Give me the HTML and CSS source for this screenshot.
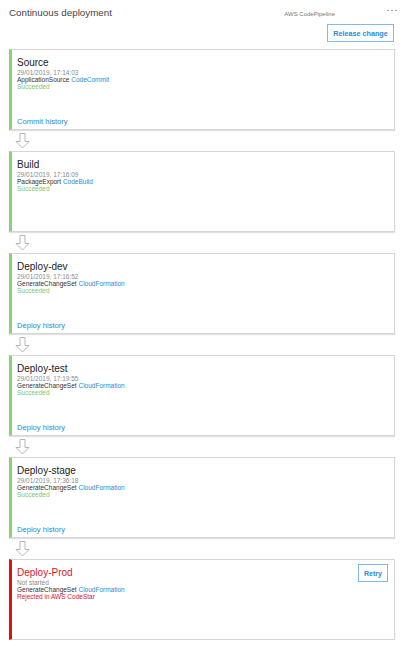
FILE: index.html
```html
<!DOCTYPE html>
<html>
<head>
<meta charset="utf-8">
<link rel="stylesheet" href="styles.css">
</head>
<body>
<div class="page">
  <header class="header">
    <h1 class="title">Continuous deployment</h1>
    <div class="meta">
      <div class="meta-top">
        <span class="provider">AWS CodePipeline</span>
        <svg class="dots" width="10" height="3" viewBox="0 0 10 3"><circle cx="1" cy="1.5" r="0.8"/><circle cx="5" cy="1.5" r="0.8"/><circle cx="9" cy="1.5" r="0.8"/></svg>
      </div>
      <button class="btn btn-release">Release change</button>
    </div>
  </header>

  <main class="stages">
    <section class="card ok">
      <div class="card-body">
        <h2 class="stage-name">Source</h2>
        <div class="line muted">29/01/2019, 17:14:03</div>
        <div class="line">ApplicationSource <a class="lnk">CodeCommit</a></div>
        <div class="line green">Succeeded</div>
        <a class="history">Commit history</a>
      </div>
    </section>
    <div class="arrow"><svg width="15" height="16" viewBox="0 0 15 16"><path d="M5 0.5 H10 V8.5 H14 L7.5 15 L1 8.5 H5 Z"/></svg></div>

    <section class="card ok">
      <div class="card-body">
        <h2 class="stage-name">Build</h2>
        <div class="line muted">29/01/2019, 17:16:09</div>
        <div class="line">PackageExport <a class="lnk">CodeBuild</a></div>
        <div class="line green">Succeeded</div>
      </div>
    </section>
    <div class="arrow"><svg width="15" height="16" viewBox="0 0 15 16"><path d="M5 0.5 H10 V8.5 H14 L7.5 15 L1 8.5 H5 Z"/></svg></div>

    <section class="card ok">
      <div class="card-body">
        <h2 class="stage-name">Deploy-dev</h2>
        <div class="line muted">29/01/2019, 17:16:52</div>
        <div class="line">GenerateChangeSet <a class="lnk">CloudFormation</a></div>
        <div class="line green">Succeeded</div>
        <a class="history">Deploy history</a>
      </div>
    </section>
    <div class="arrow"><svg width="15" height="16" viewBox="0 0 15 16"><path d="M5 0.5 H10 V8.5 H14 L7.5 15 L1 8.5 H5 Z"/></svg></div>

    <section class="card ok">
      <div class="card-body">
        <h2 class="stage-name">Deploy-test</h2>
        <div class="line muted">29/01/2019, 17:19:55</div>
        <div class="line">GenerateChangeSet <a class="lnk">CloudFormation</a></div>
        <div class="line green">Succeeded</div>
        <a class="history">Deploy history</a>
      </div>
    </section>
    <div class="arrow"><svg width="15" height="16" viewBox="0 0 15 16"><path d="M5 0.5 H10 V8.5 H14 L7.5 15 L1 8.5 H5 Z"/></svg></div>

    <section class="card ok">
      <div class="card-body">
        <h2 class="stage-name">Deploy-stage</h2>
        <div class="line muted">29/01/2019, 17:36:18</div>
        <div class="line">GenerateChangeSet <a class="lnk">CloudFormation</a></div>
        <div class="line green">Succeeded</div>
        <a class="history">Deploy history</a>
      </div>
    </section>
    <div class="arrow"><svg width="15" height="16" viewBox="0 0 15 16"><path d="M5 0.5 H10 V8.5 H14 L7.5 15 L1 8.5 H5 Z"/></svg></div>

    <section class="card fail">
      <div class="card-body">
        <h2 class="stage-name red">Deploy-Prod</h2>
        <div class="line muted">Not started</div>
        <div class="line">GenerateChangeSet <a class="lnk">CloudFormation</a></div>
        <div class="line red">Rejected in AWS CodeStar</div>
      </div>
      <button class="btn btn-retry">Retry</button>
    </section>
  </main>
</div>
</body>
</html>
```

FILE: styles.css
```css
* { box-sizing: border-box; }
html, body { margin: 0; padding: 0; background: #fff; }
body { font-family: "Liberation Sans", Arial, sans-serif; color: #333; }

.page { width: 404px; }

.header {
  display: flex;
  justify-content: space-between;
  align-items: flex-start;
  height: 49px;
  padding: 0 7px 0 9px;
}
.title {
  margin: 7px 0 0 0;
  font-size: 9.8px;
  line-height: 12px;
  font-weight: normal;
  color: #444;
}
.meta {
  display: flex;
  flex-direction: column;
  align-items: flex-end;
  padding-top: 9px;
}
.meta-top {
  display: flex;
  align-items: flex-start;
  gap: 52px;
  height: 10px;
}
.provider {
  font-size: 6px;
  line-height: 10px;
  color: #777;
}
.dots { fill: #888; margin-top: 0px; }

.btn {
  font-family: "Liberation Sans", Arial, sans-serif;
  background: #fff;
  border: 1px solid #7dbbe8;
  color: #2b8ad3;
  font-weight: bold;
  cursor: pointer;
  padding: 0;
}
.btn-release {
  margin-top: 5px;
  margin-right: 3px;
  width: 67px;
  height: 18px;
  font-size: 7.2px;
}

.stages {
  display: flex;
  flex-direction: column;
  padding: 0 9px;
}
.card {
  display: flex;
  height: 81px;
  border: 1px solid #d6d6d6;
  border-left: 3px solid #8bd17a;
  box-shadow: 0 1px 1px rgba(0,0,0,0.12);
  padding: 4px 6px 3px 5px;
  background: #fff;
}
.card.fail { border-left-color: #d9140f; }
.card-body {
  flex: 1;
  display: flex;
  flex-direction: column;
  padding-top: 3px;
}
.stage-name {
  margin: 0;
  font-size: 10px;
  line-height: 12px;
  font-weight: normal;
  color: #222;
}
.line {
  font-size: 6.5px;
  line-height: 7px;
  color: #333;
}
.muted { color: #8a8a8a; }
.green { color: #7cc66b; }
.red { color: #d8161c; }
.lnk { color: #2b8ad3; }
.history {
  margin-top: auto;
  font-size: 7.6px;
  line-height: 9px;
  color: #2b8ad3;
}
.btn-retry {
  width: 30px;
  height: 18px;
  font-size: 7px;
}

.arrow {
  height: 21px;
  padding: 3px 0 0 6px;
}
.arrow svg { display: block; }
.arrow path { fill: #fff; stroke: #b5b5b5; stroke-width: 1; }
```
